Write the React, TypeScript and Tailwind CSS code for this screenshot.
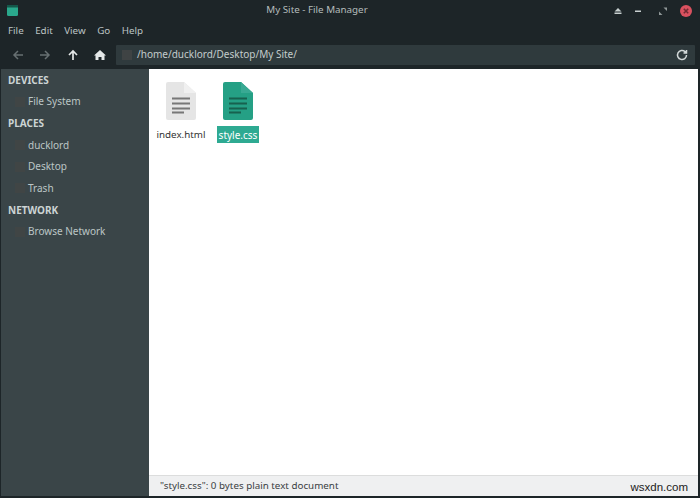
export default function App() {
  const Head = ({ t }: { t: string }) => (
    <div className="h-[22px] pl-[7px] flex items-center text-[10px] font-bold text-[#ccd4d4]">{t}</div>
  );
  const Item = ({ t }: { t: string }) => (
    <div className="h-[21.5px] pl-[14px] flex items-center gap-[3px] text-[10px] text-[#bcc6c6]">
      <div className="w-[10px] h-[10px] bg-[#404545]" />
      <span>{t}</span>
    </div>
  );
  const Doc = ({ body, fold, line }: { body: string; fold: string; line: string }) => (
    <svg width="30" height="38" viewBox="0 0 30 38">
      <path d="M2 0H18L30 11V36a2 2 0 0 1-2 2H2a2 2 0 0 1-2-2V2a2 2 0 0 1 2-2Z" fill={body} />
      <path d="M18 0L30 11H18Z" fill={fold} />
      <path d="M6 15.500H24V17.500H6ZM6 20.500H24V22.500H6ZM6 25.500H24V27.500H6ZM6 29.500H18V31.500H6Z" fill={line} />
    </svg>
  );
  return (
    <div className="w-[700px] h-[498px] bg-[#1d2528] flex flex-col overflow-hidden text-[#c8d0d0]" style={{ fontFamily: '"Noto Sans", sans-serif' }}>
      <div className="h-[21px] shrink-0 flex items-center pl-[7px] pr-[8px]">
        <svg width="11" height="11" viewBox="0 0 11 11"><rect width="11" height="11" rx="1.500" fill="#2aa88c" /><rect width="11" height="2.500" fill="#14574a" /></svg>
        <div className="flex-1 text-center text-[9.800px] text-[#b4bcbc] pl-[3px]">My Site - File Manager</div>
        <div className="flex items-center">
          <svg width="10" height="10" viewBox="0 0 10 10" fill="#c8d0d0"><path d="M5 2L8.500 5.500H1.500ZM1.500 6.500H8.500V8H1.500Z" /></svg>
          <svg width="10" height="10" viewBox="0 0 10 10" fill="#c8d0d0" className="ml-[10px]"><rect x="2" y="4.500" width="6" height="1.500" /></svg>
          <svg width="10" height="10" viewBox="0 0 10 10" fill="#8f9797" className="ml-[15px]"><path d="M5.500 1.500H9V5ZM1 5.500L4.500 9H1Z" /></svg>
          <svg width="12" height="12" viewBox="0 0 12 12" className="ml-[12px]"><circle cx="6" cy="6" r="6" fill="#d9515f" /><path d="M3.800 3.800L8.200 8.200M8.200 3.800L3.800 8.200" stroke="#702a33" strokeWidth="1.600" /></svg>
        </div>
      </div>
      <div className="h-[21px] shrink-0 flex items-center pl-[8px] gap-[11.500px] text-[9.800px] text-[#bcc4c4]">
        <span>File</span><span>Edit</span><span>View</span><span>Go</span><span>Help</span>
      </div>
      <div className="h-[25px] shrink-0 flex items-center pl-[12px] pr-[5px]">
        <svg width="12" height="12" viewBox="0 0 12 12" stroke="#677072" strokeWidth="1.500" fill="none"><path d="M11 6H2M6 2L2 6L6 10" /></svg>
        <svg width="12" height="12" viewBox="0 0 12 12" stroke="#677072" strokeWidth="1.500" fill="none" className="ml-[15px]"><path d="M1 6H10M6 2L10 6L6 10" /></svg>
        <svg width="12" height="12" viewBox="0 0 12 12" stroke="#e4e8e8" strokeWidth="1.700" fill="none" className="ml-[16px]"><path d="M6 11V2M2 6L6 2L10 6" /></svg>
        <svg width="12" height="12" viewBox="0 0 12 12" fill="#e4e8e8" className="ml-[15px]"><path d="M6 1L12 6.500H10.500V11H7.500V8H4.500V11H1.500V6.500H0Z" /></svg>
        <div className="ml-[10px] flex-1 h-[20px] bg-[#2f3a3d] rounded-[1px] flex items-center pl-[6px] pr-[7px]">
          <div className="w-[10px] h-[10px] bg-[#3f4344]" />
          <span className="ml-[5px] text-[10px] text-[#c4cccc]">/home/ducklord/Desktop/My Site/</span>
          <svg width="12" height="12" viewBox="0 0 24 24" fill="none" stroke="#d2d8d8" strokeWidth="3" className="ml-auto"><path d="M21 12a9 9 0 1 1-3-6.700L21 8M21 2v6h-6" /></svg>
        </div>
      </div>
      <div className="flex-1 flex min-h-0 pb-[2px] mt-[2px]">
        <div className="w-[148px] ml-px shrink-0 bg-[#3a4548]">
          <Head t="DEVICES" />
          <Item t="File System" />
          <Head t="PLACES" />
          <Item t="ducklord" />
          <Item t="Desktop" />
          <Item t="Trash" />
          <Head t="NETWORK" />
          <Item t="Browse Network" />
        </div>
        <div className="flex-1 flex flex-col mr-[2px]">
          <div className="flex-1 bg-white flex items-start gap-[9px] pt-[13px] pl-[6px]">
            <div className="w-[52px] flex flex-col items-center">
              <Doc body="#e5e5e5" fold="#f0f0f0" line="#777777" />
              <div className="mt-[6px] pt-[1px] text-[9.800px] leading-[16px] text-[#333]">index.html</div>
            </div>
            <div className="w-[44px] flex flex-col items-center">
              <Doc body="#25a085" fold="#39a993" line="#17614f" />
              <div className="mt-[6px] px-[2px] pt-[1px] text-[10px] leading-[16px] bg-[#2eaa92] text-white">style.css</div>
            </div>
          </div>
          <div className="h-[21px] shrink-0 bg-[#eff0f1] border-t border-[#dcdddd] flex items-center pl-[11px] text-[9.800px] text-[#3a4043] relative">
            <span>"style.css": 0 bytes plain text document</span>
            <span className="absolute right-[10px] top-[3px] text-[#222] text-[11.500px]" style={{ fontFamily: '"Liberation Sans", sans-serif' }}>wsxdn.com</span>
          </div>
        </div>
      </div>
    </div>
  );
}
